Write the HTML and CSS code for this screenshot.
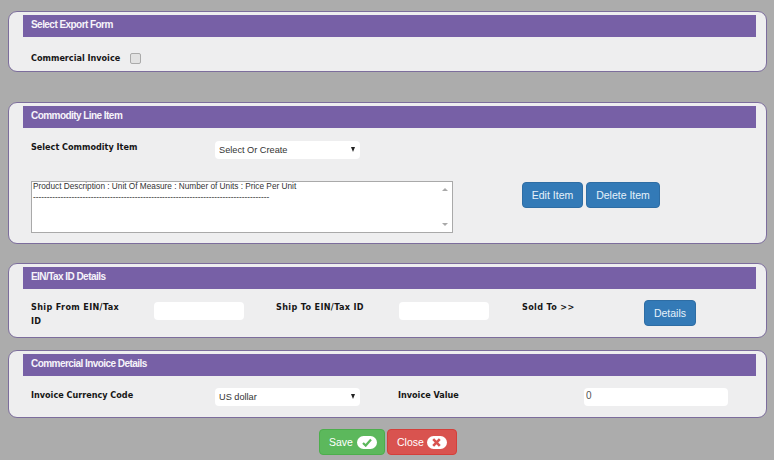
FILE: index.html
```html
<!DOCTYPE html>
<html lang="en">
<head>
<meta charset="utf-8">
<title>Commercial Invoice</title>
<link rel="stylesheet" href="styles.css">
</head>
<body>
<section class="panel panel-export">
  <h2 class="panel-title">Select Export Form</h2>
  <div class="row row-export">
    <label class="label" for="ci">Commercial Invoice</label>
    <input class="check" id="ci" type="checkbox">
  </div>
</section>

<section class="panel panel-commodity">
  <h2 class="panel-title">Commodity Line Item</h2>
  <div class="row row-commodity">
    <span class="label">Select Commodity Item</span>
    <div class="select-wrap"><select class="select"><option>Select Or Create</option></select></div>
  </div>
  <div class="row row-list">
    <div class="listbox">
      <textarea class="listbox-text" readonly>Product Description : Unit Of Measure : Number of Units : Price Per Unit
--------------------------------------------------------------------------------------</textarea>
      <div class="scroll"><span class="arrow-up"></span><span class="arrow-down"></span></div>
    </div>
    <div class="list-actions">
      <button class="btn btn-blue btn-edit" type="button">Edit Item</button>
      <button class="btn btn-blue btn-delete" type="button">Delete Item</button>
    </div>
  </div>
</section>

<section class="panel panel-ein">
  <h2 class="panel-title">EIN/Tax ID Details</h2>
  <div class="row row-ein">
    <span class="label">Ship From EIN/Tax ID</span>
    <input class="field field-ein" type="text">
    <span class="label">Ship To EIN/Tax ID</span>
    <input class="field field-ein" type="text">
    <span class="label">Sold To &gt;&gt;</span>
    <button class="btn btn-blue btn-details" type="button">Details</button>
  </div>
</section>

<section class="panel panel-details">
  <h2 class="panel-title">Commercial Invoice Details</h2>
  <div class="row row-details">
    <span class="label">Invoice Currency Code</span>
    <div class="select-wrap"><select class="select"><option>US dollar</option></select></div>
    <span class="label">Invoice Value</span>
    <input class="field field-value" type="text" value="0">
  </div>
</section>

<div class="actions">
  <button class="btn btn-save" type="button">Save
    <span class="pill"><svg width="10" height="9" viewBox="0 0 10 9"><path d="M1 5 L3.7 7.6 L9 1.6" fill="none" stroke="#5cb85c" stroke-width="2.2"/></svg></span>
  </button>
  <button class="btn btn-close" type="button">Close
    <span class="pill"><svg width="9" height="9" viewBox="0 0 9 9"><path d="M1.2 1.2 L7.8 7.8 M7.8 1.2 L1.2 7.8" fill="none" stroke="#d9534f" stroke-width="2.6"/></svg></span>
  </button>
</div>
</body>
</html>
```
FILE: styles.css
```css
* { box-sizing: border-box; }
html, body { margin: 0; height: 100%; }
body {
  background: #acacac;
  padding: 11px 7px 0 8px;
  font-family: "Liberation Sans", Arial, sans-serif;
  overflow: hidden;
}
.panel {
  background: #eeeeef;
  border: 1px solid #7c6d9c;
  border-radius: 9px;
  padding: 3px 10px 0 14px;
}
.panel-export { height: 61px; margin-bottom: 30px; }
.panel-commodity { height: 142px; margin-bottom: 19px; }
.panel-ein { height: 75px; margin-bottom: 12px; }
.panel-details { height: 68px; margin-bottom: 11px; }
.panel-title {
  margin: 0;
  height: 22px;
  line-height: 20px;
  padding-left: 8px;
  background: #7760a6;
  color: #f6f4fa;
  font-size: 10px;
  font-weight: 700;
  letter-spacing: -0.55px;
}
.label {
  font-family: "DejaVu Sans", Verdana, sans-serif;
  font-stretch: condensed;
  font-size: 9px;
  font-weight: 700;
  line-height: 14px;
  color: #161616;
}
.row { padding-left: 8px; }
.row-export { display: flex; align-items: center; gap: 10px; padding-top: 14px; }
.check {
  appearance: none;
  margin: 0;
  width: 11px;
  height: 11px;
  background: #e2e2e2;
  border: 1px solid #aaaaaa;
  border-radius: 2px;
}
.row-commodity {
  display: grid;
  grid-template-columns: 184px 145px;
  padding-top: 12px;
  align-items: start;
}
.row-commodity .select-wrap { margin-top: 1px; }
.select-wrap { position: relative; width: 145px; height: 18px; }
.select-wrap::after {
  content: "";
  position: absolute;
  right: 5px;
  top: 6px;
  border-left: 2.5px solid transparent;
  border-right: 2.5px solid transparent;
  border-top: 5px solid #222222;
}
.select {
  appearance: none;
  display: block;
  width: 100%;
  height: 18px;
  padding: 0 0 0 4px;
  background: #ffffff;
  border: 0;
  border-radius: 4px;
  font-family: "Liberation Sans", Arial, sans-serif;
  font-size: 9.2px;
  color: #333333;
}
.row-list {
  display: grid;
  grid-template-columns: 491px auto;
  padding-top: 22px;
}
.listbox {
  display: flex;
  width: 422px;
  height: 52px;
  background: #ffffff;
  border: 1px solid #a9a9a9;
  overflow: hidden;
}
.listbox-text {
  flex: 1;
  margin: -1px 0 0;
  padding: 0 0 0 1px;
  border: 0;
  outline: 0;
  resize: none;
  overflow: hidden;
  background: transparent;
  font-family: "Liberation Sans", Arial, sans-serif;
  font-size: 8.25px;
  line-height: 11px;
  color: #333333;
}
.scroll {
  width: 14px;
  display: flex;
  flex-direction: column;
  justify-content: space-between;
  align-items: center;
  padding: 6px 0 6px;
}
.arrow-up, .arrow-down {
  border-left: 3px solid transparent;
  border-right: 3px solid transparent;
}
.arrow-up { border-bottom: 3px solid #a9a9a9; }
.arrow-down { border-top: 3px solid #a9a9a9; }
.list-actions { display: flex; gap: 3px; padding-top: 1px; }
.btn {
  display: block;
  margin: 0;
  height: 26px;
  padding: 0;
  border: 1px solid transparent;
  border-radius: 4px;
  font-family: "Liberation Sans", Arial, sans-serif;
  font-size: 10.5px;
  color: #ffffff;
}
.btn-blue { background: #337ab7; border-color: #2e6da4; color: #e6f2fb; }
.btn-edit { width: 61px; }
.btn-delete { width: 74px; }
.row-ein {
  display: grid;
  grid-template-columns: 123px 122px 123px 123px 122px 52px;
  padding-top: 11px;
  align-items: start;
}
.row-ein .label { padding-right: 26px; letter-spacing: 0.35px; }
.field {
  display: block;
  height: 18px;
  margin: 0;
  padding: 0 2px;
  background: #ffffff;
  border: 0;
  border-radius: 4px;
  font-family: "Liberation Sans", Arial, sans-serif;
  font-size: 9.5px;
  color: #555555;
}
.field-ein { width: 90px; margin-top: 2px; }
.field-value { width: 144px; padding-bottom: 3px; font-size: 10px; }
.row-details {
  display: grid;
  grid-template-columns: 184px 183px 186px 144px;
  padding-top: 12px;
  align-items: start;
}
.actions { display: flex; justify-content: center; gap: 2px; padding-left: 1px; }
.btn-save, .btn-close {
  display: flex;
  align-items: center;
  justify-content: flex-start;
  gap: 4px;
  padding-left: 9px;
  font-size: 10.5px;
}
.btn-close { gap: 3px; }
.btn-save { width: 66px; background: #5cb85c; border-color: #4cae4c; }
.btn-close { width: 70px; background: #d9534f; border-color: #d43f3a; }
.pill {
  display: flex;
  align-items: center;
  justify-content: center;
  width: 20px;
  height: 13px;
  background: #ffffff;
  border-radius: 7px;
}
```
